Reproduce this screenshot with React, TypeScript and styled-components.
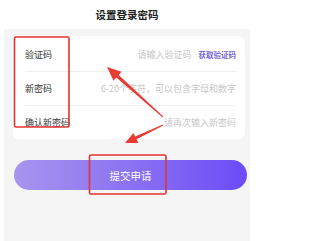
import styled, { createGlobalStyle } from 'styled-components'

const GlobalStyle = createGlobalStyle`
  html,
  body {
    margin: 0;
    padding: 0;
    background: #fff;
  }

  body {
    font-family: 'Noto Sans CJK SC', 'Noto Sans', sans-serif;
  }
`

const Page = styled.div`
  position: relative;
  width: 254px;
  height: 241px;
  overflow: hidden;
  background: #fff;
`

const Header = styled.div`
  display: flex;
  align-items: center;
  justify-content: center;
  height: 29px;

  font-size: 10.5px;
  font-weight: 700;
  color: #222;
`

const Body = styled.div`
  display: flex;
  flex-direction: column;
  height: 212px;
  margin: 0 4px;
  padding-top: 7px;

  background: #f5f5f5;
`

const Card = styled.div`
  display: flex;
  flex-direction: column;
  width: 232px;
  margin-left: 9px;
  padding: 2px 9px 0 12px;
  box-sizing: border-box;

  border-radius: 6px;
  background: #fff;
`

const Row = styled.div<{ $last?: boolean }>`
  display: flex;
  align-items: center;
  justify-content: space-between;
  height: 33px;

  border-bottom: ${(p) => (p.$last ? 'none' : '1px solid #efefef')};
`

const Label = styled.span`
  font-size: 9px;
  color: #333;
  white-space: nowrap;
`

const Field = styled.div`
  display: flex;
  align-items: center;
  gap: 7px;
`

const Placeholder = styled.span`
  font-size: 9px;
  color: #c6c6c6;
  white-space: nowrap;
`

const CodeLink = styled.span`
  font-size: 7.5px;
  font-weight: 700;
  color: #7565d9;
  white-space: nowrap;
`

const Submit = styled.button`
  display: flex;
  align-items: center;
  justify-content: center;
  width: 233px;
  height: 30px;
  margin: 21px 0 0 10px;
  padding: 0;

  border: none;
  border-radius: 15px;
  background: linear-gradient(90deg, #a795ee 0%, #8a72f2 50%, #6c4cf7 100%);

  font-family: inherit;
  font-size: 10.5px;
  color: #fff;
`

const Marks = styled.svg`
  position: absolute;
  top: 0;
  left: 0;
  pointer-events: none;
`

const fields = [
  { label: '验证码', hint: '请输入验证码', code: true },
  { label: '新密码', hint: '6-20个字符，可以包含字母和数字' },
  { label: '确认新密码', hint: '请再次输入新密码' },
]

const App = () => {
  return (
    <Page>
      <GlobalStyle />
      <Header>设置登录密码</Header>
      <Body>
        <Card>
          {fields.map((f, i) => (
            <Row key={f.label} $last={i === fields.length - 1}>
              <Label>{f.label}</Label>
              <Field>
                <Placeholder>{f.hint}</Placeholder>
                {f.code && <CodeLink>获取验证码</CodeLink>}
              </Field>
            </Row>
          ))}
        </Card>
        <Submit>提交申请</Submit>
      </Body>

      {/* red annotation marks drawn over the page */}
      <Marks width="254" height="241" viewBox="0 0 254 241">
        <rect x="14.5" y="37" width="54.5" height="90" rx="1.5" fill="none" stroke="#e3342f" strokeWidth="1.6" />
        <rect x="89.5" y="155" width="76.5" height="39" rx="1.5" fill="none" stroke="#e3342f" strokeWidth="1.6" />
        <polygon
          fill="#ea3b33"
          points="107,67 121.5,71.8 118.7,75 163.3,116.6 162.7,117.4 116.3,77.6 113.5,80.8"
        />
        <polygon
          fill="#ea3b33"
          points="125,143 133.5,132.9 135.2,136.4 162.8,124.5 163.2,125.5 136.6,139.3 138.3,142.9"
        />
      </Marks>
    </Page>
  )
}

export default App
